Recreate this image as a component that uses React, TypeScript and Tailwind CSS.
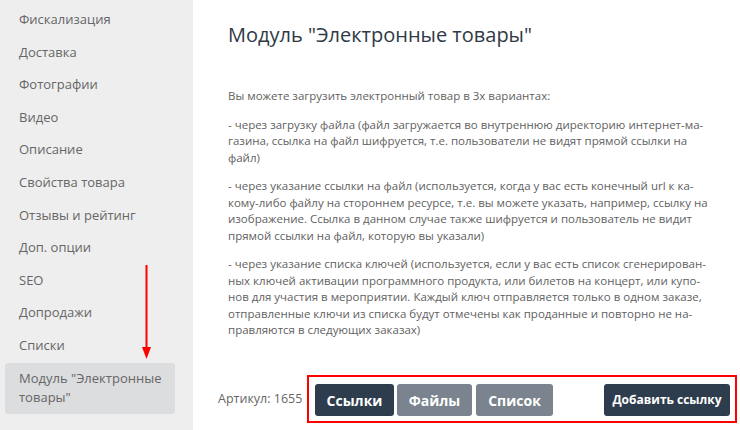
import React from "react";

const items = [
  "Фискализация",
  "Доставка",
  "Фотографии",
  "Видео",
  "Описание",
  "Свойства товара",
  "Отзывы и рейтинг",
  "Доп. опции",
  "SEO",
  "Допродажи",
  "Списки",
];

const paras: string[][] = [
  ["Вы можете загрузить электронный товар в 3х вариантах:"],
  [
    "- через загрузку файла (файл загружается во внутреннюю директорию интернет-ма-",
    "газина, ссылка на файл шифруется, т.е. пользователи не видят прямой ссылки на",
    "файл)",
  ],
  [
    "- через указание ссылки на файл (используется, когда у вас есть конечный url к ка-",
    "кому-либо файлу на стороннем ресурсе, т.е. вы можете указать, например, ссылку на",
    "изображение. Ссылка в данном случае также шифруется и пользователь не видит",
    "прямой ссылки на файл, которую вы указали)",
  ],
  [
    "- через указание списка ключей (используется, если у вас есть список сгенерирован-",
    "ных ключей активации программного продукта, или билетов на концерт, или купо-",
    "нов для участия в мероприятии. Каждый ключ отправляется только в одном заказе,",
    "отправленные ключи из списка будут отмечены как проданные и повторно не на-",
    "правляются в следующих заказах)",
  ],
];

export default function App() {
  return (
    <div
      className="relative flex w-[740px] h-[430px] overflow-hidden bg-white"
      style={{ fontFamily: '"Open Sans", "Noto Sans", sans-serif' }}
    >
      <aside className="w-[193px] shrink-0 bg-[#eeeeee] pt-[3px]">
        {items.map((t) => (
          <div key={t} className="px-[19px] py-[7px] text-[13px] leading-[18.6px] text-[#666666]">
            {t}
          </div>
        ))}
        <div className="mx-[5px] mt-[1px] w-[170px] rounded-[3px] bg-[#dcdddf] px-[14px] pt-[6px] pb-[7px] text-[13px] leading-[19px] text-[#666666]">
          <span className="block whitespace-nowrap">Модуль "Электронные</span>
          <span className="block whitespace-nowrap">товары"</span>
        </div>
      </aside>

      <main className="flex flex-1 flex-col">
        <div className="pl-[35px]">
          <h1 className="pt-[20px] text-[20px] leading-[30px] font-normal text-[#2f3a45]">
            Модуль "Электронные товары"
          </h1>
          <div className="mt-[38px] text-[11.5px] leading-[16.5px] text-[#5f5f5f]">
            {paras.map((p, i) => (
              <p key={i} className={i === 0 ? "" : "mt-[12px]"}>
                {p.map((l, j) => (
                  <span key={j} className="block whitespace-nowrap">
                    {l}
                  </span>
                ))}
              </p>
            ))}
          </div>
        </div>

        <div className="mt-auto mb-[7px] ml-[25px] flex items-center">
          <span className="w-[84px] shrink-0 whitespace-nowrap text-[12.5px] text-[#666666]">Артикул: 1655</span>
          <div className="ml-[5px] flex h-[48px] w-[430px] shrink-0 items-center border-2 border-[#ff0000] pl-[6px] pr-[5px] pt-[2px]">
            <button className="h-[32px] w-[79px] rounded-[3px] bg-[#2e3d4d] text-[14px] font-bold text-white">
              Ссылки
            </button>
            <button className="ml-[3px] h-[32px] w-[75px] rounded-[3px] bg-[#7a838e] text-[14px] font-bold text-white">
              Файлы
            </button>
            <button className="ml-[4px] h-[32px] w-[77px] rounded-[3px] bg-[#7a838e] text-[14px] font-bold text-white">
              Список
            </button>
            <button className="ml-auto h-[32px] w-[126px] rounded-[3px] bg-[#2e3d4d] text-[12px] font-bold text-white">
              Добавить ссылку
            </button>
          </div>
        </div>
      </main>

      <svg
        className="pointer-events-none absolute left-[140px] top-[263px]"
        width="14"
        height="98"
        viewBox="0 0 14 98"
      >
        <line x1="6.5" y1="2" x2="6.5" y2="86" stroke="#ff0000" strokeWidth="2" />
        <polygon points="2,84 11,84 6.5,96" fill="#ff0000" />
      </svg>
    </div>
  );
}
